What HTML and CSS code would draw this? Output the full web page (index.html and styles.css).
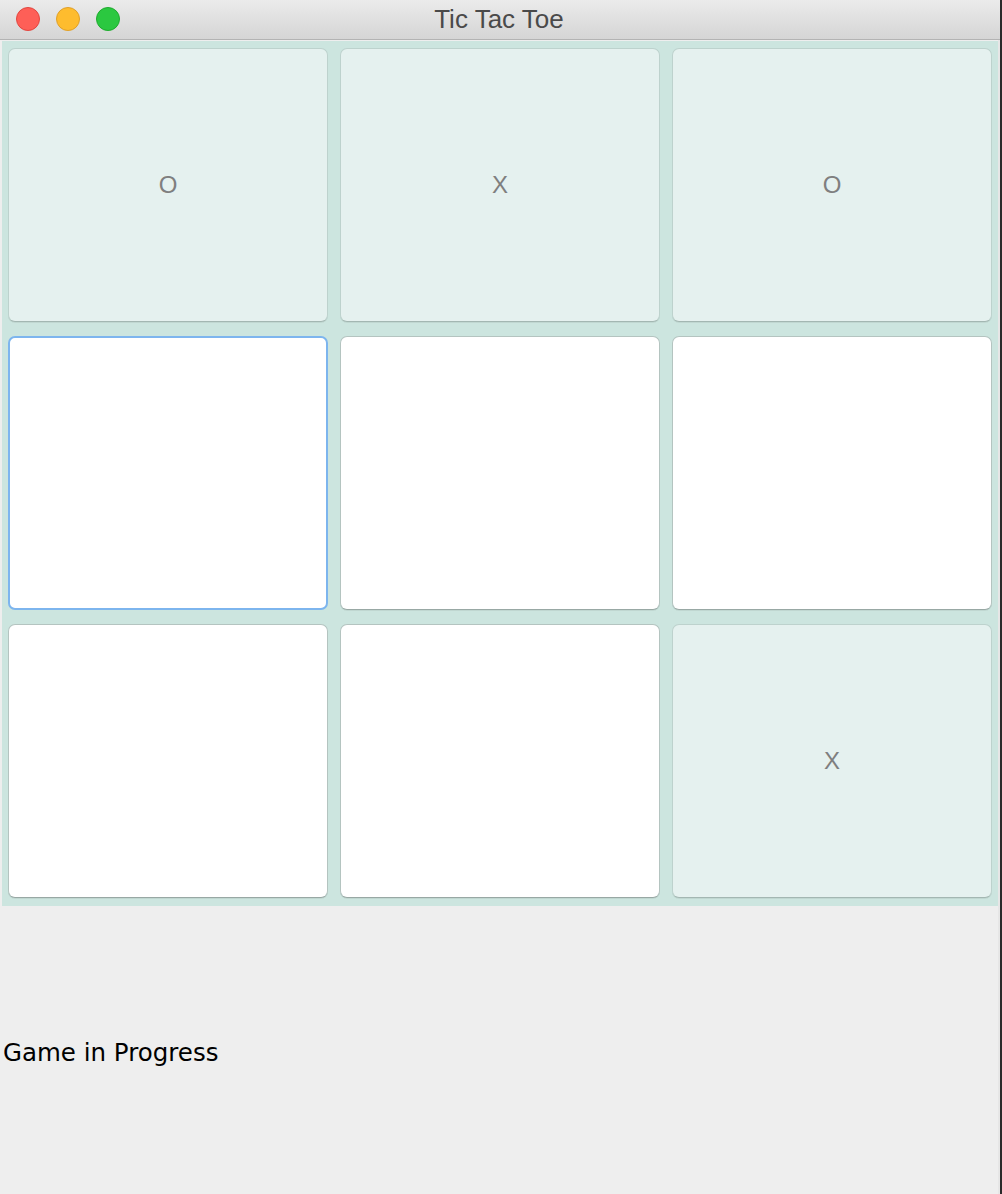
FILE: index.html
```html
<!DOCTYPE html>
<html>
<head>
<meta charset="utf-8">
<title>Tic Tac Toe</title>
<link rel="stylesheet" href="styles.css">
</head>
<body>
<div class="window">
  <div class="titlebar">
    <div class="lights">
      <span class="light red"></span>
      <span class="light yellow"></span>
      <span class="light green"></span>
    </div>
    <div class="title">Tic Tac Toe</div>
  </div>
  <div class="content">
    <div class="board">
      <div class="cell played">O</div>
      <div class="cell played">X</div>
      <div class="cell played">O</div>
      <div class="cell focused"></div>
      <div class="cell"></div>
      <div class="cell"></div>
      <div class="cell"></div>
      <div class="cell"></div>
      <div class="cell played">X</div>
    </div>
    <div class="status">Game in Progress</div>
  </div>
</div>
<div class="edge"></div>
</body>
</html>
```
FILE: styles.css
```css
html, body {
  margin: 0;
  padding: 0;
  width: 1002px;
  height: 1194px;
  overflow: hidden;
  background: #eeeeee;
}
body {
  display: flex;
}
.window {
  width: 998px;
  height: 1194px;
  display: flex;
  flex-direction: column;
  background: #eeeeee;
}
.titlebar {
  height: 39px;
  border-bottom: 1px solid #b3b3b3;
  background: linear-gradient(#ebebeb, #d5d5d5);
  position: relative;
  display: flex;
  align-items: center;
  justify-content: center;
  width: 1000px;
}
.lights {
  position: absolute;
  left: 16px;
  top: 7px;
  display: flex;
  gap: 16px;
}
.light {
  width: 22px;
  height: 22px;
  border-radius: 50%;
  border: 1px solid rgba(0,0,0,0.12);
}
.red { background: #fe5f57; border-color: #e2463f; }
.yellow { background: #febc2e; border-color: #e0a028; }
.green { background: #2bc840; border-color: #1eab2d; }
.title {
  font-family: "Liberation Sans", Arial, sans-serif;
  font-size: 26px;
  color: #4a4a4a;
  margin-left: -2px;
  margin-top: -1px;
}
.content {
  flex: 1;
  display: flex;
  flex-direction: column;
  padding-left: 2px;
}
.board {
  margin-top: 1px;
  background: #cce5df;
  padding: 7px 6px 8px 6px;
  display: grid;
  grid-template-columns: repeat(3, 320px);
  grid-template-rows: repeat(3, 274px);
  gap: 14px 12px;
  width: 984px;
}
.cell {
  background: #ffffff;
  border: 1px solid #b4c4c0;
  border-bottom-color: #98a8a4;
  border-radius: 7px;
  box-shadow: 0 1px 0 rgba(0,0,0,0.06);
  display: flex;
  align-items: center;
  justify-content: center;
  font-family: "Liberation Sans", Arial, sans-serif;
  font-size: 24px;
  color: #7f7f7f;
}
.cell.played {
  background: #e5f1ef;
  border-color: #bdd2cd;
  border-bottom-color: #a3b7b2;
}
.cell.focused {
  border: 2px solid #7db5ee;
  box-shadow: none;
}
.status {
  margin-top: 132px;
  font-family: "DejaVu Sans", "Liberation Sans", sans-serif;
  font-size: 24.5px;
  color: #000000;
  padding-left: 1px;
}
.edge {
  width: 4px;
  height: 1194px;
  background: linear-gradient(90deg, #e6e6e6 0 2px, #2a2a2a 2px);
}
```
